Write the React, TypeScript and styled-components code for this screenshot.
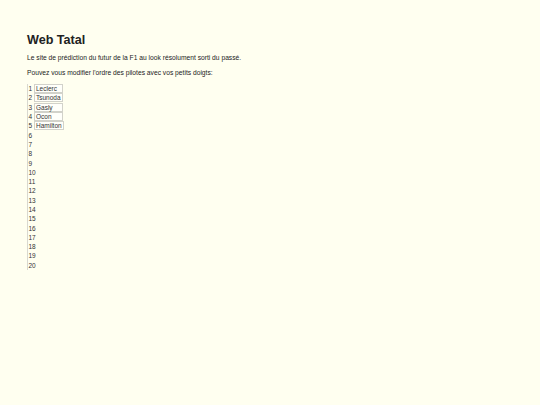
import React from 'react';
import styled, { createGlobalStyle } from 'styled-components';

const GlobalStyle = createGlobalStyle`
  html, body {
    margin: 0;
    padding: 0;
    background: #fffff0;
  }
  body {
    font-family: "Liberation Sans", Arial, sans-serif;
    color: #222;
  }
`;

const Page = styled.div`
  padding: 32px 27px;
`;

const Title = styled.h1`
  margin: 0 0 6px;
  font-size: 12.6px;
  line-height: 16px;
  font-weight: bold;
  color: #222;
`;

const Text = styled.p`
  margin: 0 0 7px;
  font-size: 6.7px;
  line-height: 8px;
  color: #222;
`;

const Ranking = styled.div`
  margin-top: 0;
  border-left: 1px solid #d8d8d0;
  display: flex;
  flex-direction: column;
  width: max-content;
`;

const Row = styled.div`
  display: flex;
  align-items: center;
  height: 9.3px;
  font-size: 6.5px;
  color: #333;
`;

const Position = styled.span`
  width: 5.5px;
  padding-left: 0.5px;
`;

const Driver = styled.span`
  box-sizing: border-box;
  height: 9px;
  min-width: 29px;
  padding: 0 1px;
  line-height: 7px;
  border: 1px solid #d2d2ca;
  background: #fffffa;
`;

const drivers = ['Leclerc', 'Tsunoda', 'Gasly', 'Ocon', 'Hamilton'];

export default function App() {
  const rows = Array.from({ length: 20 }, (_, i) => i + 1);
  return (
    <Page>
      <GlobalStyle />
      <Title>Web Tatal</Title>
      <Text>Le site de prédiction du futur de la F1 au look résolument sorti du passé.</Text>
      <Text>Pouvez vous modifier l'ordre des pilotes avec vos petits doigts:</Text>
      <Ranking>
        {rows.map((n) => (
          <Row key={n}>
            <Position>{n}</Position>
            {drivers[n - 1] && <Driver>{drivers[n - 1]}</Driver>}
          </Row>
        ))}
      </Ranking>
    </Page>
  );
}
